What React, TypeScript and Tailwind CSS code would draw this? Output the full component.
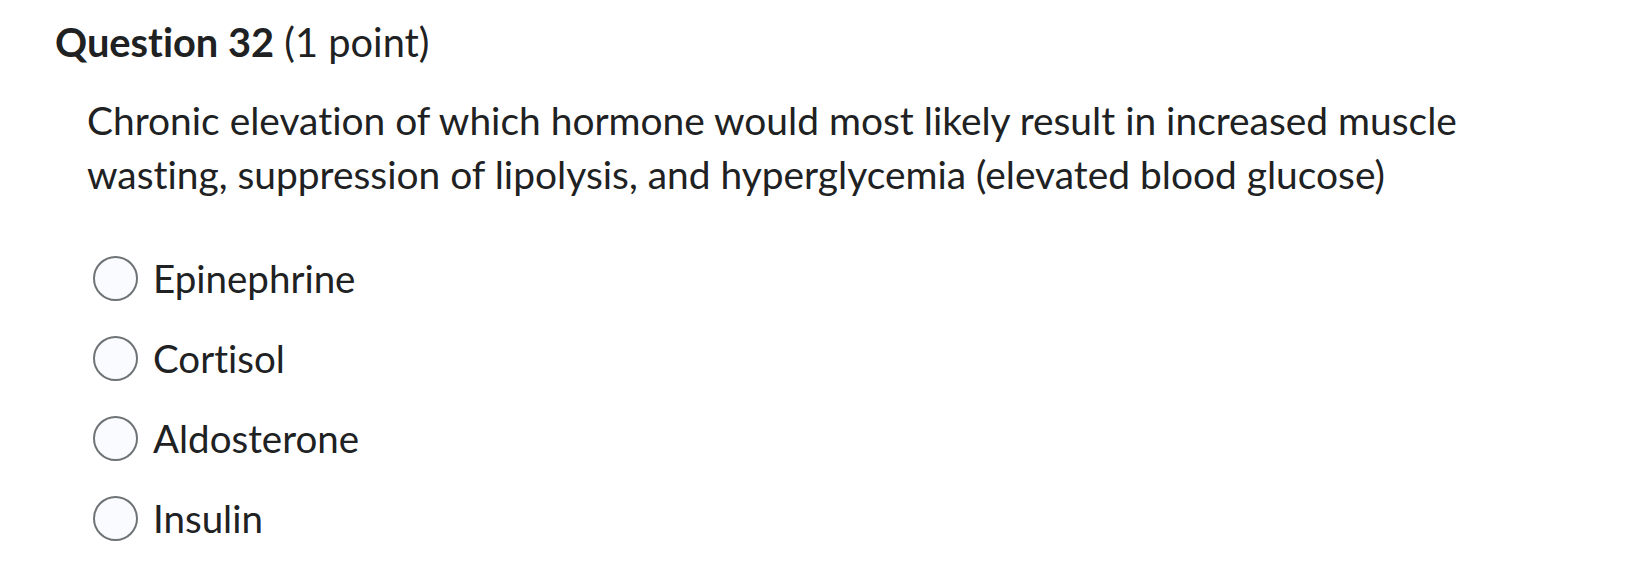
import React from "react";

const options = ["Epinephrine", "Cortisol", "Aldosterone", "Insulin"];

export default function App() {
  return (
    <div className="w-[1650px] h-[582px] bg-white text-[#202122] font-['Lato','Noto_Sans',sans-serif] [font-variant-ligatures:none]">
      <div className="pl-[55px] pt-[18px]">
        <h2 className="text-[39.8px] leading-[48px]">
          <span className="font-bold">Question 32</span>
          <span className="font-normal"> (1 point)</span>
        </h2>
        <div className="pl-[32px] pt-[27px]">
          <p className="text-[38.9px] leading-[54px] max-w-[1440px]">
            Chronic elevation of which hormone would most likely result in increased muscle wasting, suppression of lipolysis, and hyperglycemia (elevated blood glucose)
          </p>
          <div className="pt-[54px] flex flex-col gap-[34px]">
            {options.map((o) => (
              <label key={o} className="flex items-center gap-[15px] h-[46px] pl-[6px]">
                <span className="w-[45px] h-[45px] rounded-full border-2 border-[#6e7376] bg-[#f9fbff] shrink-0" />
                <span className="text-[38.5px] leading-[46px]">{o}</span>
              </label>
            ))}
          </div>
        </div>
      </div>
    </div>
  );
}
